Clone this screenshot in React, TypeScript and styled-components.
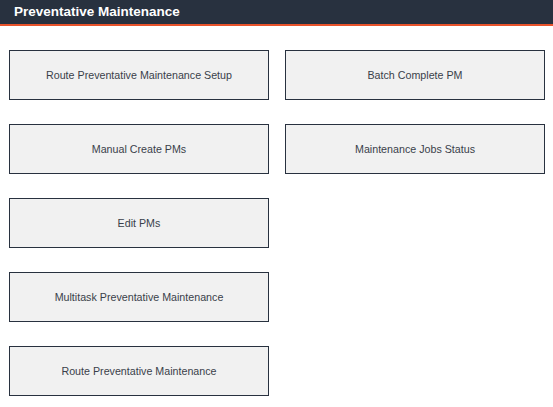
import React from "react";
import styled, { createGlobalStyle } from "styled-components";

const Global = createGlobalStyle`
  html, body { margin: 0; padding: 0; background: #ffffff; }
  body { font-family: "Liberation Sans", Arial, sans-serif; }
`;

const Header = styled.div`
  height: 24px;
  background: #28313f;
  border-bottom: 2px solid #e8532b;
  display: flex;
  align-items: center;
  padding-left: 14px;
`;

const Title = styled.h1`
  margin: 0;
  font-size: 13.5px;
  font-weight: bold;
  color: #ffffff;
  line-height: 24px;
`;

const Content = styled.div`
  display: flex;
  gap: 16px;
  padding: 24px 9px;
`;

const Column = styled.div`
  display: flex;
  flex-direction: column;
  gap: 24px;
`;

const Tile = styled.button`
  box-sizing: border-box;
  width: 260px;
  height: 50px;
  background: #f1f1f1;
  border: 1px solid #28313f;
  border-radius: 0;
  font-family: "Liberation Sans", Arial, sans-serif;
  font-size: 10.7px;
  color: #3a3f4a;
  display: flex;
  align-items: center;
  justify-content: center;
  padding: 0;
  cursor: pointer;
`;

const left = [
  "Route Preventative Maintenance Setup",
  "Manual Create PMs",
  "Edit PMs",
  "Multitask Preventative Maintenance",
  "Route Preventative Maintenance",
];
const right = ["Batch Complete PM", "Maintenance Jobs Status"];

export default function App() {
  return (
    <>
      <Global />
      <Header>
        <Title>Preventative Maintenance</Title>
      </Header>
      <Content>
        <Column>
          {left.map((t) => (
            <Tile key={t}>{t}</Tile>
          ))}
        </Column>
        <Column>
          {right.map((t) => (
            <Tile key={t}>{t}</Tile>
          ))}
        </Column>
      </Content>
    </>
  );
}
